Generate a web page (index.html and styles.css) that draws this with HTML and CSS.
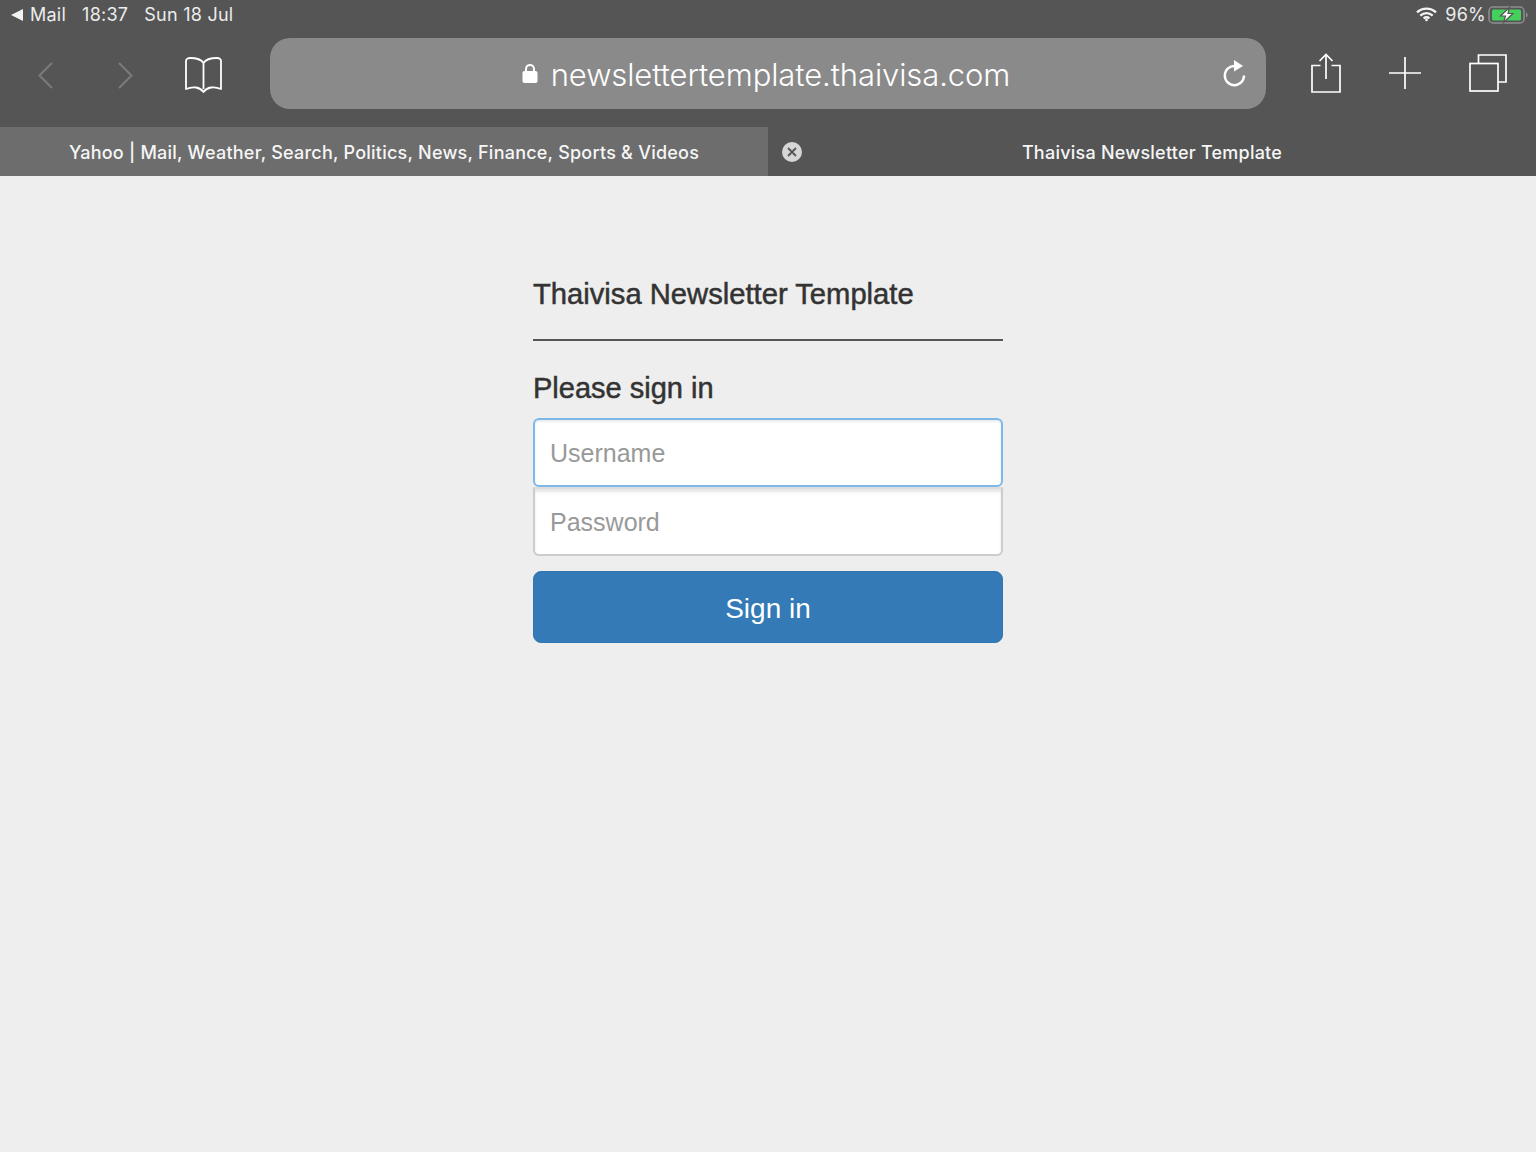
FILE: index.html
```html
<!DOCTYPE html>
<html lang="en">
<head>
    <meta charset="UTF-8">
    <meta name="viewport" content="width=device-width, initial-scale=1.0">
    <title>Thaivisa Newsletter Template</title>
    <link rel="stylesheet" href="styles.css">
</head>
<body>
    <header class="browser">
        <div class="status-bar">
            <div class="status-left">
                <svg class="back-mail" width="12" height="12" viewBox="0 0 12 12"><path d="M0 6 L12 0 V12 Z" fill="#f2f2f2"/></svg>
                <span class="status-mail">Mail</span>
                <span class="status-time">18:37</span>
                <span class="status-date">Sun 18 Jul</span>
            </div>
            <div class="status-right">
                <svg width="21" height="15" viewBox="0 0 21 15" fill="none" stroke="#f5f5f5" stroke-width="2.4">
                    <path d="M1 5.4 C6.5 0.4 14.5 0.4 20 5.4"/>
                    <path d="M4.3 8.6 C8 5.4 13 5.4 16.7 8.6"/>
                    <path d="M7.6 11.4 C9.4 10 11.6 10 13.4 11.4"/>
                    <circle cx="10.5" cy="13" r="1.3" fill="#f5f5f5" stroke="none"/>
                </svg>
                <span class="status-battery">96%</span>
                <svg class="battery-icon" width="40" height="18" viewBox="0 0 40 18">
                    <rect x="1" y="1" width="35" height="16" rx="4" fill="none" stroke="#8e8e8e" stroke-width="1.5"/>
                    <rect x="4" y="3.5" width="29" height="11" rx="1.5" fill="#43d15c"/>
                    <path d="M38 6.5 C39.2 7 39.6 8 39.6 9 C39.6 10 39.2 11 38 11.5 Z" fill="#8e8e8e"/>
                    <path d="M21.5 1.5 L12.5 10 H17.5 L15.5 16.5 L25 7.5 H20 Z" fill="#fff" stroke="#555" stroke-width="1.2"/>
                </svg>
            </div>
        </div>

        <div class="toolbar">
            <div class="nav-buttons">
                <svg class="nav-icon" width="15" height="27" viewBox="0 0 15 27" fill="none" stroke="#7b7b7b" stroke-width="2"><path d="M14 1 L1.5 13.5 L14 26"/></svg>
                <svg class="nav-icon" width="15" height="27" viewBox="0 0 15 27" fill="none" stroke="#7b7b7b" stroke-width="2"><path d="M1 1 L13.5 13.5 L1 26"/></svg>
                <svg class="book-icon" width="39" height="37" viewBox="0 0 39 37" fill="none" stroke="#fff" stroke-width="1.8" stroke-linejoin="round">
                    <path d="M19.5 6 C17 2 12 1 6 1 C4 1 2 2 2 4 V32 C9 29 16 30 19.5 35 C23 30 30 29 37 32 V4 C37 2 35 1 33 1 C27 1 22 2 19.5 6 V32"/>
                </svg>
            </div>
            <div class="url-bar">
                <div class="url-text">
                    <svg width="16" height="21" viewBox="0 0 16 21"><path d="M4 9 V6 C4 0.5 12 0.5 12 6 V9" fill="none" stroke="#fff" stroke-width="2"/><rect x="0.5" y="8" width="15" height="12" rx="2" fill="#fff"/></svg>
                    <span class="url-host">newslettertemplate.thaivisa.com</span>
                </div>
                <svg class="reload" width="24" height="28" viewBox="0 0 24 28" fill="none">
                    <path d="M13 7 A9.6 9.6 0 1 0 22 16.5" stroke="#fff" stroke-width="2.4"/>
                    <path d="M12 1 L21 7 L12 12.5 Z" fill="#fff"/>
                </svg>
            </div>
            <div class="actions">
                <svg width="30" height="40" viewBox="0 0 30 40" fill="none" stroke="#fff" stroke-width="1.7">
                    <path d="M9.5 12.5 H1 V39 H29 V12.5 H20.5"/>
                    <path d="M15 26 V2"/>
                    <path d="M8.5 8 L15 1.5 L21.5 8"/>
                </svg>
                <svg width="32" height="32" viewBox="0 0 32 32" fill="none" stroke="#fff" stroke-width="1.7"><path d="M16 0 V32 M0 16 H32"/></svg>
                <svg width="38" height="38" viewBox="0 0 38 38" fill="none" stroke="#fff" stroke-width="1.7">
                    <path d="M9.5 9 V1 H37 V28 H29"/>
                    <rect x="1" y="9.5" width="28" height="27.5"/>
                </svg>
            </div>
        </div>

        <div class="tabs">
            <div class="tab tab-inactive">Yahoo | Mail, Weather, Search, Politics, News, Finance, Sports &amp; Videos</div>
            <div class="tab tab-active">
                <svg class="tab-close" width="20" height="20" viewBox="0 0 20 20">
                    <circle cx="10" cy="10" r="10" fill="#d6d6d6"/>
                    <path d="M6 6 L14 14 M14 6 L6 14" stroke="#555" stroke-width="1.8"/>
                </svg>
                Thaivisa Newsletter Template
            </div>
        </div>
    </header>

    <main class="container">
        <form class="form-signin">
            <h3 class="brand">Thaivisa Newsletter Template</h3>
            <hr class="divider">
            <h2 class="form-heading">Please sign in</h2>
            <input type="text" class="form-control field-top" placeholder="Username">
            <input type="password" class="form-control field-bottom" placeholder="Password">
            <button type="button" class="btn-signin">Sign in</button>
        </form>
    </main>
</body>
</html>
```

FILE: styles.css
```css
* {
    box-sizing: border-box;
}
html, body {
    height: 100%;
}
body {
    margin: 0;
    background-color: #eeeeee;
    font-family: "Liberation Sans", Arial, sans-serif;
    color: #333333;
}

/* browser chrome */
.browser {
    background-color: #555555;
    color: #f2f2f2;
    font-family: Inter, "Noto Sans", sans-serif;
}
.status-bar {
    height: 30px;
    display: flex;
    justify-content: space-between;
    align-items: center;
    padding: 0 8px 1px 11px;
    font-size: 18px;
    letter-spacing: 0.25px;
    color: #ececec;
}
.status-left {
    display: flex;
    align-items: center;
}
.back-mail {
    margin-right: 7px;
}
.status-time {
    margin-left: 16px;
}
.status-date {
    margin-left: 16px;
}
.status-right {
    display: flex;
    align-items: center;
    gap: 8px;
}
.battery-icon {
    margin-left: -6px;
}
.toolbar {
    height: 97px;
    display: flex;
    align-items: flex-start;
    padding-top: 8px;
}
.nav-buttons {
    width: 270px;
    height: 70px;
    display: flex;
    align-items: center;
    padding-left: 38px;
    padding-top: 4px;
}
.nav-icon + .nav-icon {
    margin-left: 65px;
}
.book-icon {
    margin-left: 51px;
}
.url-bar {
    width: 996px;
    height: 71px;
    background-color: #8a8a8a;
    border-radius: 20px;
    display: flex;
    align-items: center;
    justify-content: center;
    position: relative;
    color: #ffffff;
    font-size: 31px;
    font-weight: 300;
    letter-spacing: -0.1px;
}
.url-text {
    display: flex;
    align-items: center;
    gap: 13px;
    margin-right: 4px;
}
.url-host {
    padding-top: 2px;
}
.reload {
    position: absolute;
    right: 20px;
    top: 21px;
}
.actions {
    height: 70px;
    display: flex;
    align-items: center;
    padding-left: 45px;
    gap: 48px;
}
.tabs {
    height: 49px;
    display: flex;
    font-size: 18px;
    font-weight: 500;
    letter-spacing: 0.23px;
    color: #f6f6f6;
}
.tab {
    width: 768px;
    display: flex;
    align-items: center;
    justify-content: center;
    position: relative;
    padding-top: 1px;
}
.tab-inactive {
    background-color: #6d6d6d;
}
.tab-close {
    position: absolute;
    left: 14px;
    top: 15px;
}

/* sign in form */
.container {
    display: flex;
    justify-content: center;
    padding-top: 100px;
}
.form-signin {
    width: 470px;
}
.brand {
    margin: 0;
    font-size: 29.2px;
    line-height: 36px;
    font-weight: normal;
    color: #333333;
    -webkit-text-stroke: 0.5px #333333;
}
.divider {
    margin: 27px 0 0;
    border: 0;
    border-top: 2px solid #555555;
}
.form-heading {
    margin: 29px 0 0;
    font-size: 29px;
    line-height: 36px;
    font-weight: normal;
    color: #333333;
    -webkit-text-stroke: 0.5px #333333;
}
.form-control {
    display: block;
    width: 100%;
    height: 69px;
    padding: 2px 15px 0;
    background-color: #ffffff;
    border: 2px solid #cccccc;
    font-family: "Liberation Sans", Arial, sans-serif;
    font-size: 25px;
    outline: none;
}
.form-control::placeholder {
    color: #999999;
}
.field-top {
    margin-top: 12px;
    border-color: #7db8ea;
    border-radius: 6px;
    box-shadow: inset 0 2px 2px rgba(0, 0, 0, 0.08);
}
.field-bottom {
    border-top-color: #dddddd;
    border-radius: 0 0 6px 6px;
    box-shadow: inset 0 3px 3px rgba(0, 0, 0, 0.1);
}
.btn-signin {
    display: block;
    width: 100%;
    height: 72px;
    margin-top: 15px;
    padding: 4px 0 0;
    background-color: #337ab7;
    border: 1px solid #3176b0;
    border-radius: 8px;
    color: #ffffff;
    font-family: "Liberation Sans", Arial, sans-serif;
    font-size: 28px;
}
```
